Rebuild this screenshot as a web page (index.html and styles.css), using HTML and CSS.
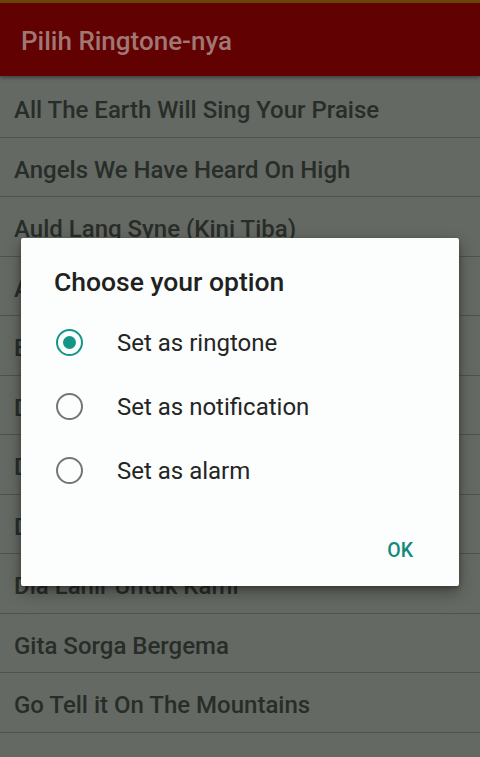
FILE: index.html
```html
<!DOCTYPE html>
<html lang="id">
<head>
<meta charset="utf-8">
<title>Pilih Ringtone-nya</title>
<link rel="stylesheet" href="styles.css">
</head>
<body>
<div class="screen">
  <div class="status-strip"></div>
  <header class="toolbar">
    <h1 class="toolbar-title">Pilih Ringtone-nya</h1>
  </header>
  <ul class="song-list">
    <li class="song">All The Earth Will Sing Your Praise</li>
    <li class="song">Angels We Have Heard On High</li>
    <li class="song">Auld Lang Syne (Kini Tiba)</li>
    <li class="song">Away In A Manger</li>
    <li class="song">Bergema Lagu Surgawi</li>
    <li class="song">Datanglah Hai Imanuel</li>
    <li class="song">Dengar Malaikat Menyanyi</li>
    <li class="song">Di Betlehem Kota Kecil</li>
    <li class="song">Dia Lahir Untuk Kami</li>
    <li class="song">Gita Sorga Bergema</li>
    <li class="song">Go Tell it On The Mountains</li>
    <li class="song">Gudang Lagu Natal</li>
  </ul>

  <div class="dialog" role="dialog" aria-labelledby="dlg-title">
    <h2 class="dialog-title" id="dlg-title">Choose your option</h2>
    <div class="options">
      <div class="option">
        <span class="radio checked"><span class="dot"></span></span>
        <span class="option-label">Set as ringtone</span>
      </div>
      <div class="option">
        <span class="radio"></span>
        <span class="option-label">Set as notification</span>
      </div>
      <div class="option">
        <span class="radio"></span>
        <span class="option-label">Set as alarm</span>
      </div>
    </div>
    <div class="actions">
      <button class="btn-ok" type="button">OK</button>
    </div>
  </div>
</div>
</body>
</html>
```

FILE: styles.css
```css
* {
  box-sizing: border-box;
}

html,
body {
  margin: 0;
  padding: 0;
  width: 480px;
  height: 757px;
  overflow: hidden;
  background: #646963;
  font-family: Roboto, "Noto Sans", "Liberation Sans", sans-serif;
}

.screen {
  position: relative;
  width: 480px;
  height: 757px;
  overflow: hidden;
  background: #646963;
}

/* thin dimmed status bar edge */
.status-strip {
  height: 3px;
  background: #6a4508;
}

.toolbar {
  height: 73px;
  background: #620101;
  display: flex;
  align-items: center;
  padding: 2px 0 0 21px;
  box-shadow: 0 2px 3px rgba(0, 0, 0, 0.35);
  position: relative;
  z-index: 1;
}

.toolbar-title {
  margin: 0;
  font-size: 26px;
  font-weight: 500;
  color: #a07774;
}

/* list of songs under the scrim */
.song-list {
  list-style: none;
  margin: 0;
  padding: 2px 0 0;
}

.song {
  height: 59.5px;
  display: flex;
  align-items: center;
  padding: 6px 0 0 14px;
  font-size: 24px;
  font-weight: 500;
  color: #292d29;
  border-bottom: 1px solid #4f534f;
  white-space: nowrap;
}

.song:last-child {
  padding-top: 10px;
}

/* modal dialog */
.dialog {
  position: absolute;
  left: 21px;
  top: 238px;
  width: 438px;
  height: 348px;
  background: #fbfefc;
  border-radius: 2px;
  box-shadow: 0 6px 16px rgba(0, 0, 0, 0.35), 0 2px 4px rgba(0, 0, 0, 0.25);
  display: flex;
  flex-direction: column;
}

.dialog-title {
  margin: 0;
  height: 72px;
  padding: 14px 0 0 33px;
  display: flex;
  align-items: center;
  font-size: 26.5px;
  font-weight: 500;
  color: #212121;
}

.options {
  display: flex;
  flex-direction: column;
}

.option {
  height: 64px;
  display: flex;
  align-items: center;
  padding-left: 35px;
  gap: 34px;
}

.radio {
  width: 27px;
  height: 27px;
  border: 2px solid #757575;
  border-radius: 50%;
  display: flex;
  align-items: center;
  justify-content: center;
  flex: none;
}

.radio.checked {
  border-color: #139687;
}

.dot {
  width: 13px;
  height: 13px;
  border-radius: 50%;
  background: #139687;
}

.option-label {
  font-size: 24px;
  color: #252525;
  padding-top: 1px;
}

.actions {
  flex: 1;
  display: flex;
  justify-content: flex-end;
  align-items: center;
  padding: 12px 38px 0 0;
}

.btn-ok {
  border: 0;
  background: transparent;
  font-family: inherit;
  font-size: 19.5px;
  font-weight: 500;
  color: #13897c;
  padding: 8px 8px;
}
```
